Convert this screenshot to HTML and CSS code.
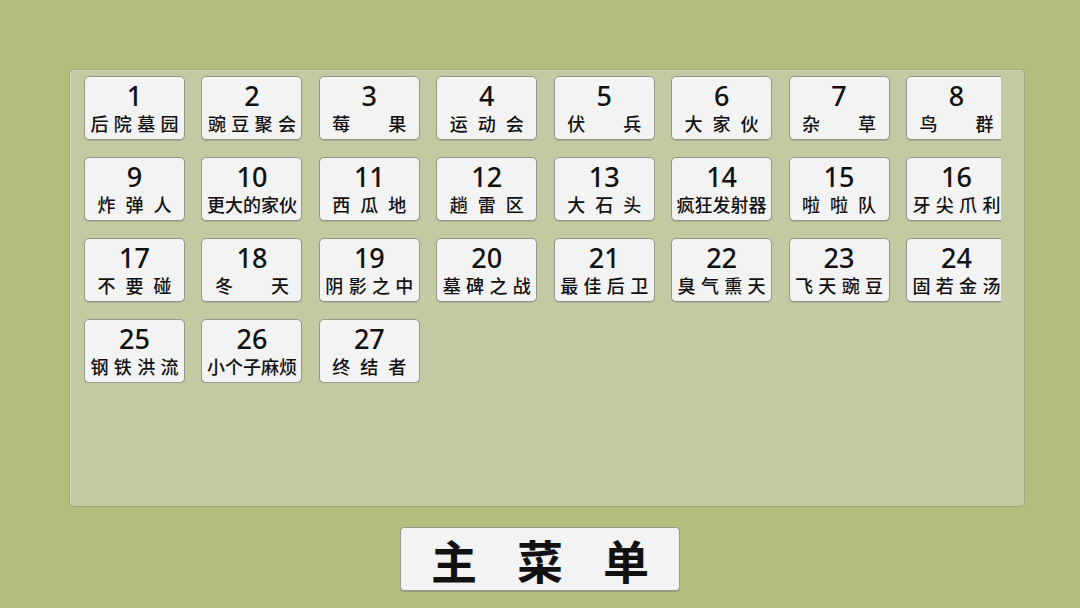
FILE: index.html
```html
<!DOCTYPE html>
<html lang="zh">
<head>
<meta charset="utf-8">
<link rel="stylesheet" href="styles.css">
</head>
<body>
<div class="screen">
  <div class="panel">
    <div class="clip">
      <div class="grid">
        <div class="tile"><div class="num">1</div><div class="name n4">后院墓园</div></div>
        <div class="tile"><div class="num">2</div><div class="name n4">豌豆聚会</div></div>
        <div class="tile"><div class="num">3</div><div class="name n2">莓果</div></div>
        <div class="tile"><div class="num">4</div><div class="name n3">运动会</div></div>
        <div class="tile"><div class="num">5</div><div class="name n2">伏兵</div></div>
        <div class="tile"><div class="num">6</div><div class="name n3">大家伙</div></div>
        <div class="tile"><div class="num">7</div><div class="name n2">杂草</div></div>
        <div class="tile"><div class="num">8</div><div class="name n2">鸟群</div></div>

        <div class="tile"><div class="num">9</div><div class="name n3">炸弹人</div></div>
        <div class="tile"><div class="num">10</div><div class="name n5">更大的家伙</div></div>
        <div class="tile"><div class="num">11</div><div class="name n3">西瓜地</div></div>
        <div class="tile"><div class="num">12</div><div class="name n3">趟雷区</div></div>
        <div class="tile"><div class="num">13</div><div class="name n3">大石头</div></div>
        <div class="tile"><div class="num">14</div><div class="name n5">疯狂发射器</div></div>
        <div class="tile"><div class="num">15</div><div class="name n3">啦啦队</div></div>
        <div class="tile"><div class="num">16</div><div class="name n4">牙尖爪利</div></div>

        <div class="tile"><div class="num">17</div><div class="name n3">不要碰</div></div>
        <div class="tile"><div class="num">18</div><div class="name n2">冬天</div></div>
        <div class="tile"><div class="num">19</div><div class="name n4">阴影之中</div></div>
        <div class="tile"><div class="num">20</div><div class="name n4">墓碑之战</div></div>
        <div class="tile"><div class="num">21</div><div class="name n4">最佳后卫</div></div>
        <div class="tile"><div class="num">22</div><div class="name n4">臭气熏天</div></div>
        <div class="tile"><div class="num">23</div><div class="name n4">飞天豌豆</div></div>
        <div class="tile"><div class="num">24</div><div class="name n4">固若金汤</div></div>

        <div class="tile"><div class="num">25</div><div class="name n4">钢铁洪流</div></div>
        <div class="tile"><div class="num">26</div><div class="name n5">小个子麻烦</div></div>
        <div class="tile"><div class="num">27</div><div class="name n3">终结者</div></div>
      </div>
    </div>
  </div>
  <div class="footer">
    <div class="menu-btn"><span class="menu-label">主菜单</span></div>
  </div>
</div>
</body>
</html>
```

FILE: styles.css
```css
html, body {
  margin: 0;
  padding: 0;
}
body {
  width: 1080px;
  height: 608px;
  background: #b3be7d;
  font-family: "Noto Sans", "Noto Sans CJK SC", sans-serif;
  color: #111;
  overflow: hidden;
}
.screen {
  display: flex;
  flex-direction: column;
  padding-top: 69px;
  box-sizing: border-box;
  height: 608px;
}
.panel {
  margin-left: 69px;
  width: 956px;
  height: 438px;
  box-sizing: border-box;
  background: #c3c9a1;
  border: 1px solid #9ea585;
  border-radius: 4px;
  box-shadow: inset 1px 1px 0 #d2d7b6;
  padding: 6px 0 0 14px;
}
.clip {
  width: 917px;
  overflow: hidden;
}
.grid {
  display: grid;
  grid-template-columns: repeat(8, 101px);
  grid-auto-rows: 64px;
  column-gap: 16.43px;
  row-gap: 17px;
  width: 923px;
}
.tile {
  box-sizing: border-box;
  background: #f3f3f3;
  border: 1px solid #94978a;
  border-radius: 5px;
  box-shadow: 0 1px 0 #a8ad92;
  display: flex;
  flex-direction: column;
  align-items: center;
}
.num {
  font-family: "Noto Sans", sans-serif;
  font-weight: 500;
  font-size: 27px;
  line-height: 32px;
  height: 32px;
  margin-top: 3px;
}
.name {
  font-family: "Noto Sans CJK SC", sans-serif;
  font-weight: 500;
  font-size: 18px;
  line-height: 22px;
  height: 22px;
  text-align: justify;
  text-align-last: justify;
  white-space: nowrap;
}
.n2, .n3 { width: 74px; }
.n4 { width: 88px; }
.n5 { width: auto; text-align-last: center; }

.footer {
  display: flex;
  justify-content: center;
  padding-top: 20px;
}
.menu-btn {
  box-sizing: border-box;
  width: 280px;
  height: 64px;
  background: #f3f3f3;
  border: 1px solid #94978a;
  border-radius: 4px;
  box-shadow: 0 1px 0 #9aa07a;
  display: flex;
  justify-content: center;
  align-items: center;
}
.menu-label {
  font-family: "Noto Sans CJK SC", sans-serif;
  font-weight: 700;
  font-size: 46px;
  line-height: 50px;
  letter-spacing: 40px;
  margin-right: -40px;
  white-space: nowrap;
}
```
